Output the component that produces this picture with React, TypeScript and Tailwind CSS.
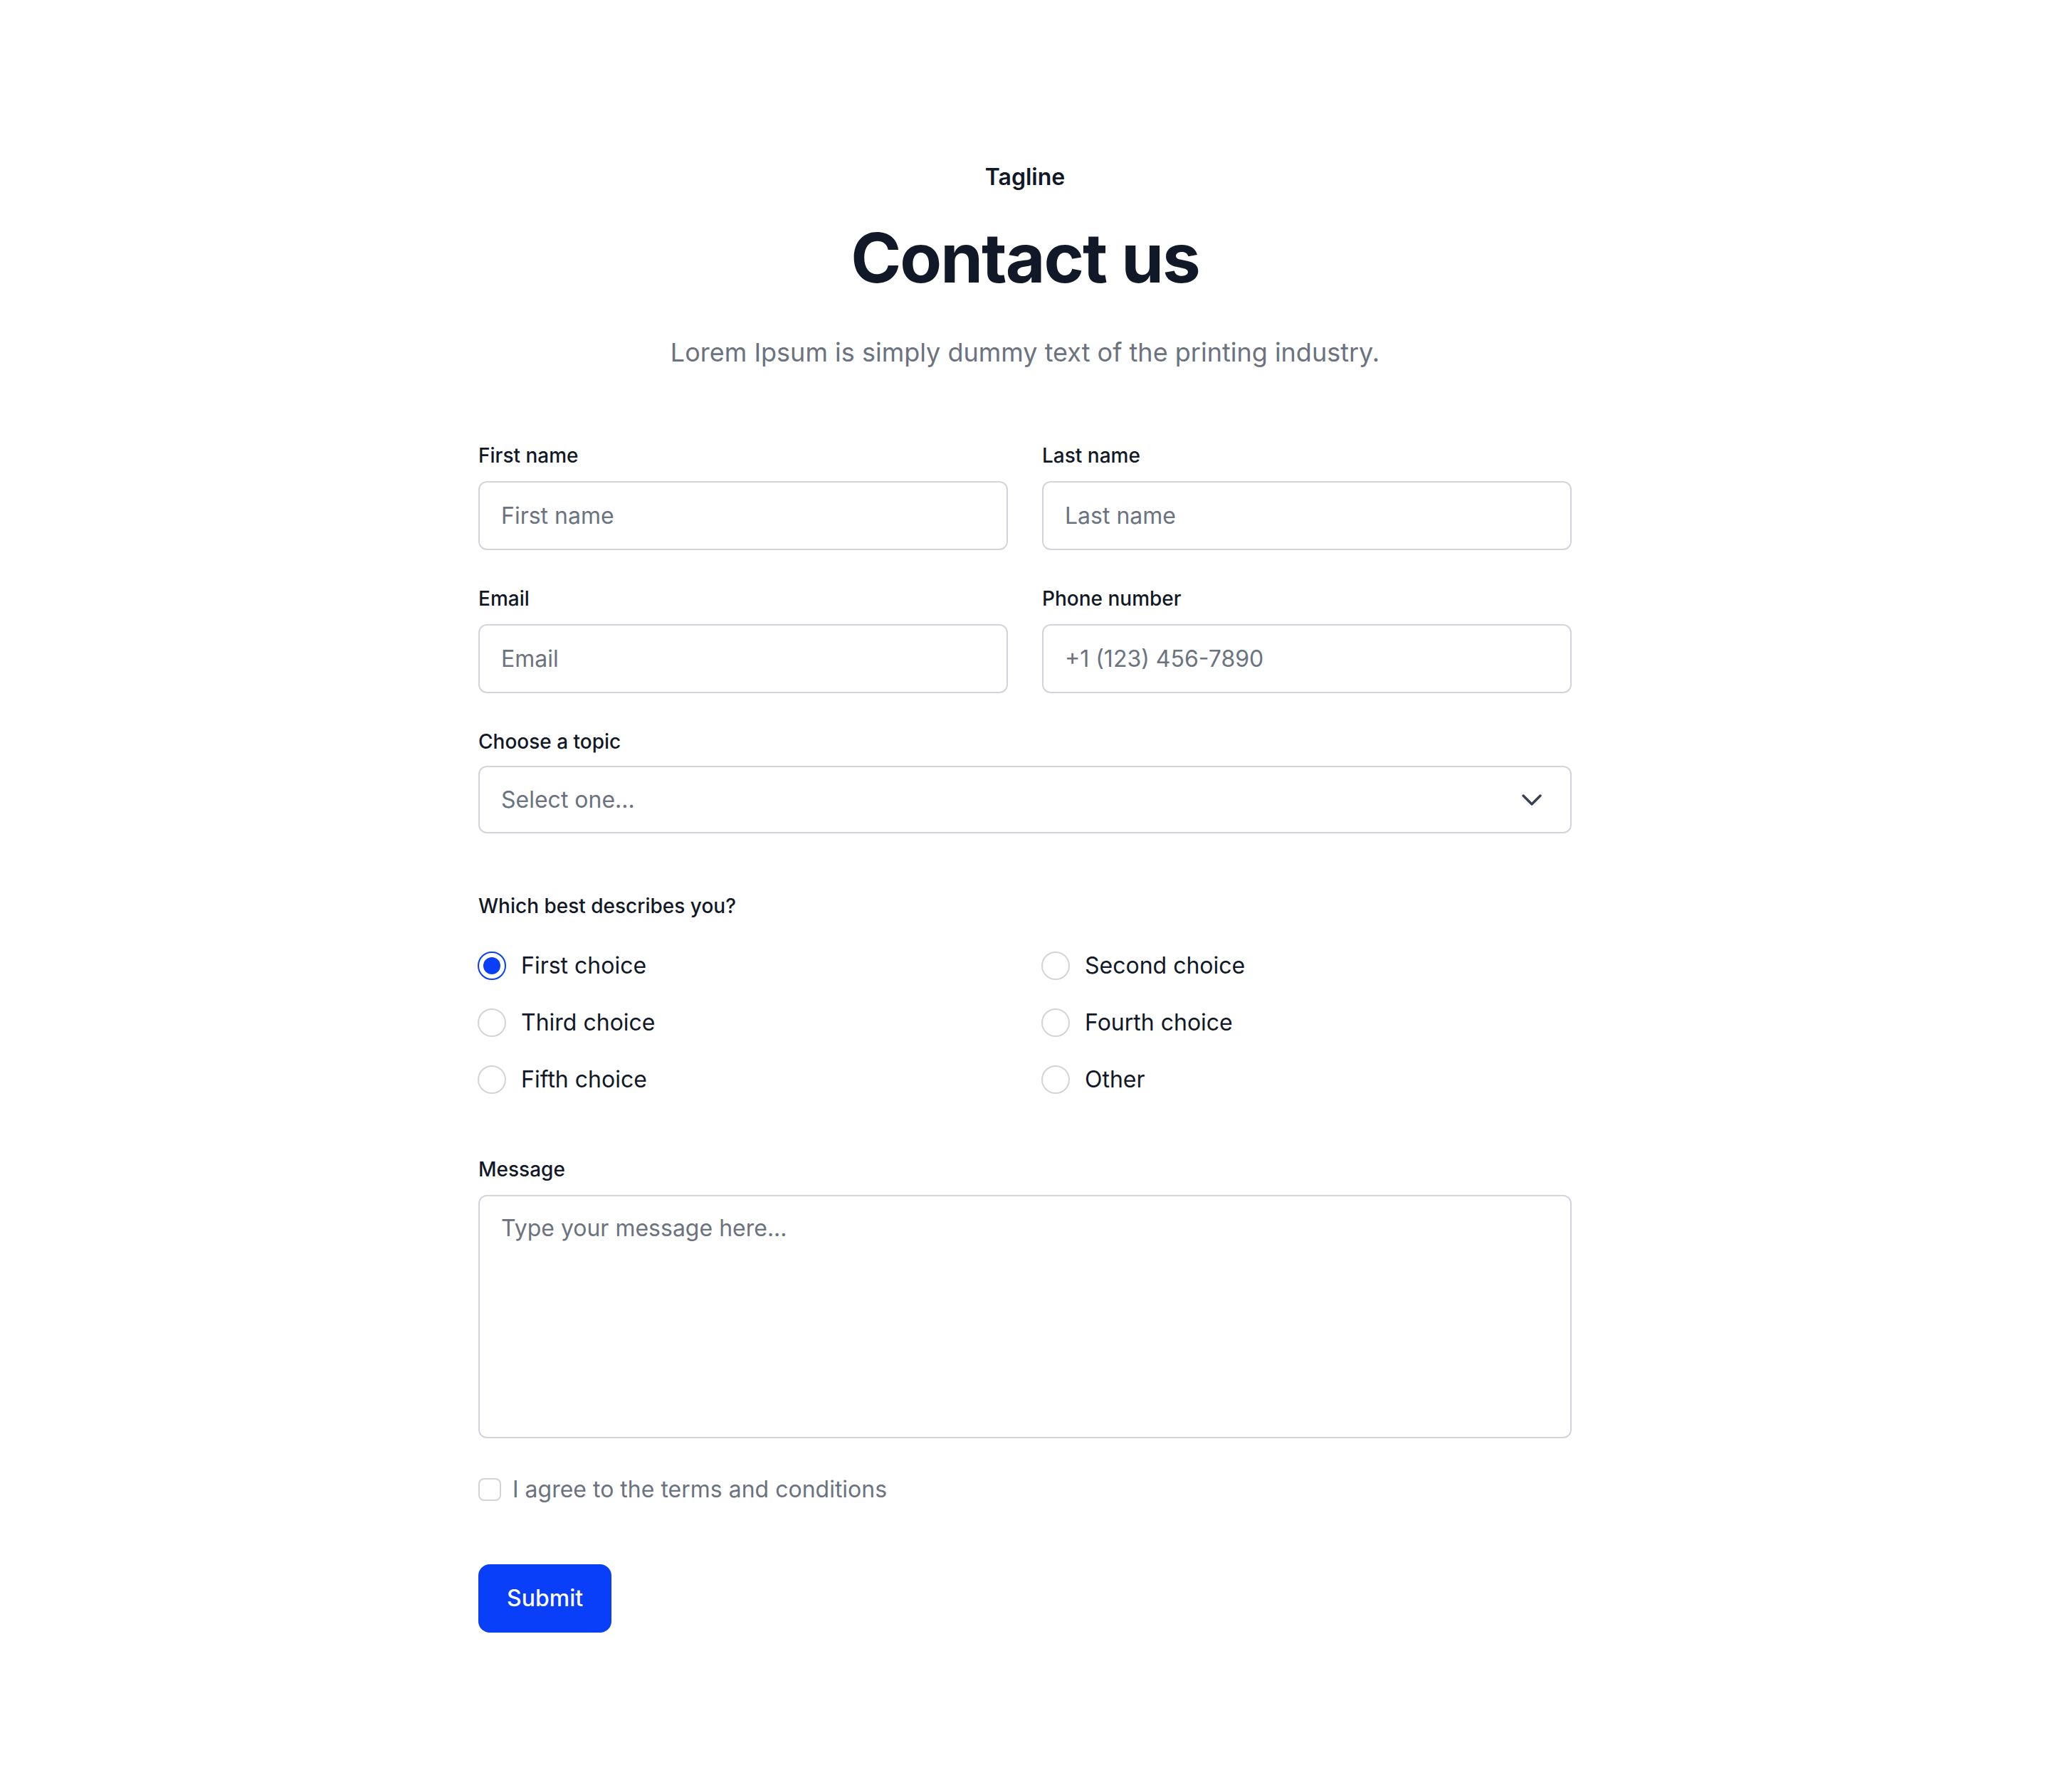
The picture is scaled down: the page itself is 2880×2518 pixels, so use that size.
import { ChevronDown } from "lucide-react";

const choices = [
  "First choice",
  "Second choice",
  "Third choice",
  "Fourth choice",
  "Fifth choice",
  "Other",
];

function Field({ label, placeholder }: { label: string; placeholder: string }) {
  return (
    <div className="flex flex-col">
      <label className="mb-[16px] text-[28px] leading-[40px] font-medium text-[#111827]">
        {label}
      </label>
      <input
        type="text"
        placeholder={placeholder}
        className="h-[97px] w-full rounded-[12px] border-2 border-[#d1d5db] bg-white px-[30px] text-[32px] text-[#111827] outline-none placeholder:text-[#6b7280]"
      />
    </div>
  );
}

function Radio({ label, checked }: { label: string; checked?: boolean }) {
  return (
    <div className="flex h-[48px] items-center gap-[21px]">
      <span
        className={
          checked
            ? "-ml-[1px] flex size-[40px] items-center justify-center rounded-full border-2 border-[#0a3ffa]"
            : "-ml-[1px] flex size-[40px] items-center justify-center rounded-full border-2 border-[#d4d4d8]"
        }
      >
        {checked && <span className="size-[24px] rounded-full bg-[#0a3ffa]" />}
      </span>
      <span className="text-[32px] leading-[48px] text-[#111827]">{label}</span>
    </div>
  );
}

export default function App() {
  return (
    <div className="min-h-screen bg-white font-['Inter',sans-serif] text-[#111827]">
      <section className="pt-[225px] pb-[224px]">
        <div className="mx-auto w-full max-w-[1536px]">
          {/* Header */}
          <div className="mb-[98px] text-center">
            <p className="mb-[32px] text-[32px] leading-[48px] font-semibold">Tagline</p>
            <h2 className="mb-[48px] text-[96px] leading-[1.2] font-bold tracking-[-0.02em]">
              Contact us
            </h2>
            <p className="text-[36px] leading-[54px] text-[#6b7280]">
              Lorem Ipsum is simply dummy text of the printing industry.
            </p>
          </div>

          {/* Form */}
          <form className="grid gap-[48px]" onSubmit={(e) => e.preventDefault()}>
            <div className="grid grid-cols-2 gap-[48px]">
              <Field label="First name" placeholder="First name" />
              <Field label="Last name" placeholder="Last name" />
              <Field label="Email" placeholder="Email" />
              <Field label="Phone number" placeholder="+1 (123) 456-7890" />
            </div>

            <div className="flex flex-col">
              <label className="mb-[14px] text-[28px] leading-[40px] font-medium">Choose a topic</label>
              <button
                type="button"
                className="flex h-[95px] w-full items-center justify-between rounded-[12px] border-2 border-[#d1d5db] bg-white px-[30px] text-left"
              >
                <span className="text-[32px] text-[#6b7280]">Select one...</span>
                <ChevronDown className="size-[48px] text-[#374151]" strokeWidth={1.75} />
              </button>
            </div>

            <div role="radiogroup" className="pt-[34px] pb-[34px]">
              <p className="mb-[40px] text-[28px] leading-[40px] font-medium">Which best describes you?</p>
              <div className="grid grid-cols-2 gap-x-[48px] gap-y-[32px]">
                {choices.map((c, i) => (
                  <Radio key={c} label={c} checked={i === 0} />
                ))}
              </div>
            </div>

            <div className="flex flex-col">
              <label className="mb-[16px] text-[28px] leading-[40px] font-medium">Message</label>
              <textarea
                placeholder="Type your message here..."
                className="h-[342px] w-full resize-none rounded-[12px] border-2 border-[#d1d5db] bg-white px-[30px] py-[21px] text-[32px] leading-[48px] text-[#111827] outline-none placeholder:text-[#6b7280]"
              />
            </div>

            <div className="mb-[33px] flex h-[48px] items-center gap-[16px]">
              <span className="size-[32px] rounded-[8px] border-2 border-[#d4d4d8] bg-white" />
              <span className="text-[32px] leading-[48px] text-[#6b7280]">
                I agree to the terms and conditions
              </span>
            </div>

            <div>
              <button
                type="submit"
                className="h-[96px] rounded-[16px] bg-[#0a3ffa] px-[40px] text-[32px] font-medium text-white"
              >
                Submit
              </button>
            </div>
          </form>
        </div>
      </section>
    </div>
  );
}
